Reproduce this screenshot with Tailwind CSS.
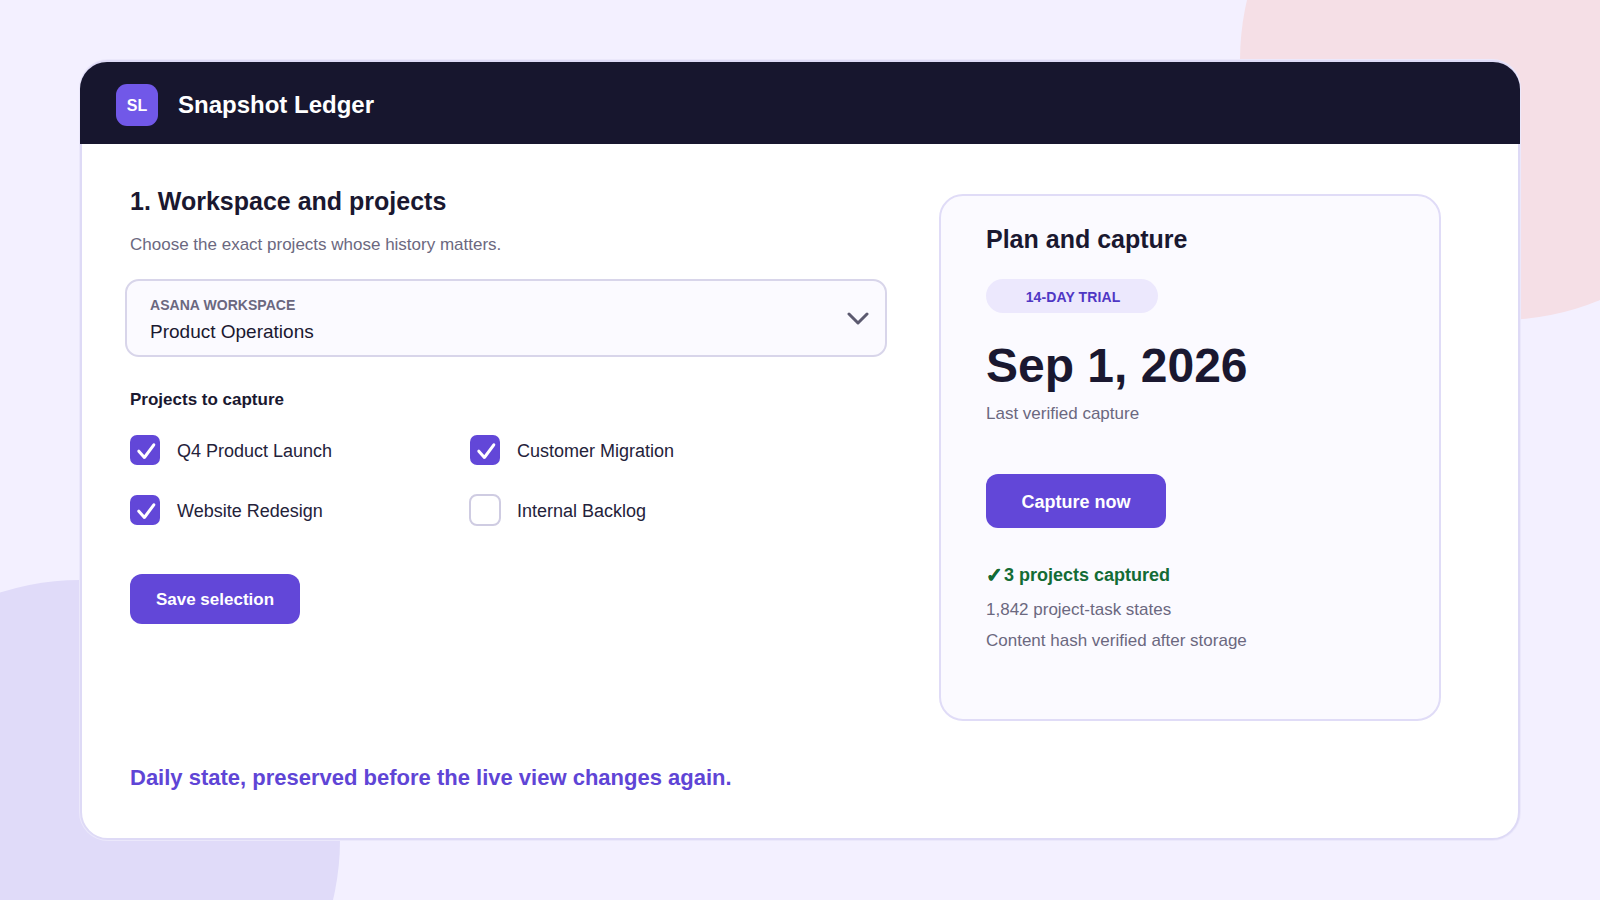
<!DOCTYPE html>
<html lang="en">
<head>
    <meta charset="UTF-8">
    <title>Snapshot Ledger</title>
    <script src="https://cdn.jsdelivr.net/npm/@tailwindcss/browser@4"></script>
</head>
<body class="font-['Liberation_Sans',Arial,sans-serif] text-[#1a1830]">
    <div class="relative w-[1600px] h-[900px] overflow-hidden bg-[#f3f0ff]">
        <!-- background blobs -->
        <div class="absolute left-[1240px] top-[-200px] w-[520px] h-[520px] rounded-full bg-[#f5dfe6]"></div>
        <div class="absolute left-[-180px] top-[580px] w-[520px] h-[520px] rounded-full bg-[#e0dbf9]"></div>

        <!-- main card -->
        <div class="absolute left-[80px] top-[60px] w-[1440px] h-[780px] flex flex-col bg-white border-2 border-[#dedaf6] rounded-[28px] shadow-[0_0_0_1px_#ebe8fb]">
            <!-- header -->
            <header class="-mx-[2px] h-[82px] shrink-0 flex items-center gap-[20px] pl-[36px] pt-[4px] bg-[#17162e] rounded-t-[27px]">
                <div class="w-[42px] h-[42px] flex items-center justify-center pt-[2px] rounded-[11px] bg-[#7158e8] text-white text-[16px] font-bold">SL</div>
                <div class="text-white text-[24px] font-bold">Snapshot Ledger</div>
            </header>

            <div class="flex flex-1 pl-[48px]">
                <!-- left column -->
                <section class="w-[809px] shrink-0 flex flex-col">
                    <h2 class="mt-[42px] text-[25px] leading-[30px] font-bold">1. Workspace and projects</h2>
                    <p class="mt-[18px] text-[17px] leading-[22px] text-[#6b6880]">Choose the exact projects whose history matters.</p>

                    <div class="mt-[23px] -ml-[5px] w-[762px] h-[78px] flex items-center justify-between pl-[23px] pr-[16px] bg-[#fbfaff] border-2 border-[#d8d5ea] rounded-[14px]">
                        <div class="pt-[4px]">
                            <div class="text-[14px] leading-[18px] font-bold tracking-[0.05px] text-[#6b6880]">ASANA WORKSPACE</div>
                            <div class="mt-[6px] text-[19px] leading-[24px]">Product Operations</div>
                        </div>
                        <svg class="w-[22px] h-[14px]" viewBox="0 0 22 14" fill="none" stroke="#5c5a70" stroke-width="3" stroke-linecap="round" stroke-linejoin="round">
                            <path d="M2 3l9 9 9-9" />
                        </svg>
                    </div>

                    <div class="mt-[32px] text-[17px] leading-[22px] font-bold">Projects to capture</div>

                    <div class="mt-[24px] grid grid-cols-[340px_1fr] gap-y-[30px] text-[18px] text-[#24223a]">
                        <label class="flex items-center gap-[17px]">
                            <span class="w-[30px] h-[30px] rounded-[7px] bg-[#6247d8]">
                                <svg class="w-[30px] h-[30px]" viewBox="0 0 30 30" fill="none" stroke="white" stroke-width="3" stroke-linecap="round" stroke-linejoin="round"><path d="M8.8 16.2l5.6 6.3L23.8 9.8" /></svg>
                            </span>
                            <span class="pt-[2px] leading-[28px]">Q4 Product Launch</span>
                        </label>
                        <label class="flex items-center gap-[17px]">
                            <span class="w-[30px] h-[30px] rounded-[7px] bg-[#6247d8]">
                                <svg class="w-[30px] h-[30px]" viewBox="0 0 30 30" fill="none" stroke="white" stroke-width="3" stroke-linecap="round" stroke-linejoin="round"><path d="M8.8 16.2l5.6 6.3L23.8 9.8" /></svg>
                            </span>
                            <span class="pt-[2px] leading-[28px]">Customer Migration</span>
                        </label>
                        <label class="flex items-center gap-[17px]">
                            <span class="w-[30px] h-[30px] rounded-[7px] bg-[#6247d8]">
                                <svg class="w-[30px] h-[30px]" viewBox="0 0 30 30" fill="none" stroke="white" stroke-width="3" stroke-linecap="round" stroke-linejoin="round"><path d="M8.8 16.2l5.6 6.3L23.8 9.8" /></svg>
                            </span>
                            <span class="pt-[2px] leading-[28px]">Website Redesign</span>
                        </label>
                        <label class="flex items-center gap-[17px]">
                            <span class="w-[30px] h-[30px] rounded-[7px] bg-white outline-2 outline-offset-[-1px] outline-[#cfcce2]"></span>
                            <span class="pt-[2px] leading-[28px]">Internal Backlog</span>
                        </label>
                    </div>

                    <button class="mt-[49px] w-[170px] h-[50px] pt-[2px] rounded-[12px] bg-[#6247d8] text-white text-[17px] font-bold">Save selection</button>

                    <p class="mt-auto mb-[46px] text-[22px] leading-[28px] font-bold text-[#5f45d6]">Daily state, preserved before the live view changes again.</p>
                </section>

                <!-- plan panel -->
                <aside class="mt-[50px] w-[502px] h-[527px] shrink-0 pl-[45px] pt-[27px] bg-[#fbfaff] border-2 border-[#e0dcf7] rounded-[24px]">
                    <h2 class="text-[25px] leading-[32px] font-bold">Plan and capture</h2>
                    <div class="mt-[24px] w-[172px] h-[34px] flex items-center justify-center pt-[2px] pl-[2px] rounded-full bg-[#ece8fd] text-[#4f37c4] text-[14px] tracking-[0.1px] font-bold">14-DAY TRIAL</div>
                    <div class="mt-[25px] text-[48px] leading-[56px] font-bold">Sep 1, 2026</div>
                    <p class="mt-[8px] text-[17px] leading-[24px] text-[#6b6880]">Last verified capture</p>
                    <button class="mt-[48px] w-[180px] h-[54px] pt-[2px] rounded-[12px] bg-[#6247d8] text-white text-[18px] font-bold">Capture now</button>
                    <div class="mt-[34px] flex items-center gap-[1px] text-[18px] leading-[26px] font-bold text-[#136b35]"><span class="text-[20px] [-webkit-text-stroke:0.6px_#136b35]">✓</span><span>3 projects captured</span></div>
                    <p class="mt-[10px] text-[17px] leading-[24px] text-[#6b6880]">1,842 project-task states</p>
                    <p class="mt-[7px] text-[17px] leading-[24px] text-[#6b6880]">Content hash verified after storage</p>
                </aside>
            </div>
        </div>
    </div>
</body>
</html>
